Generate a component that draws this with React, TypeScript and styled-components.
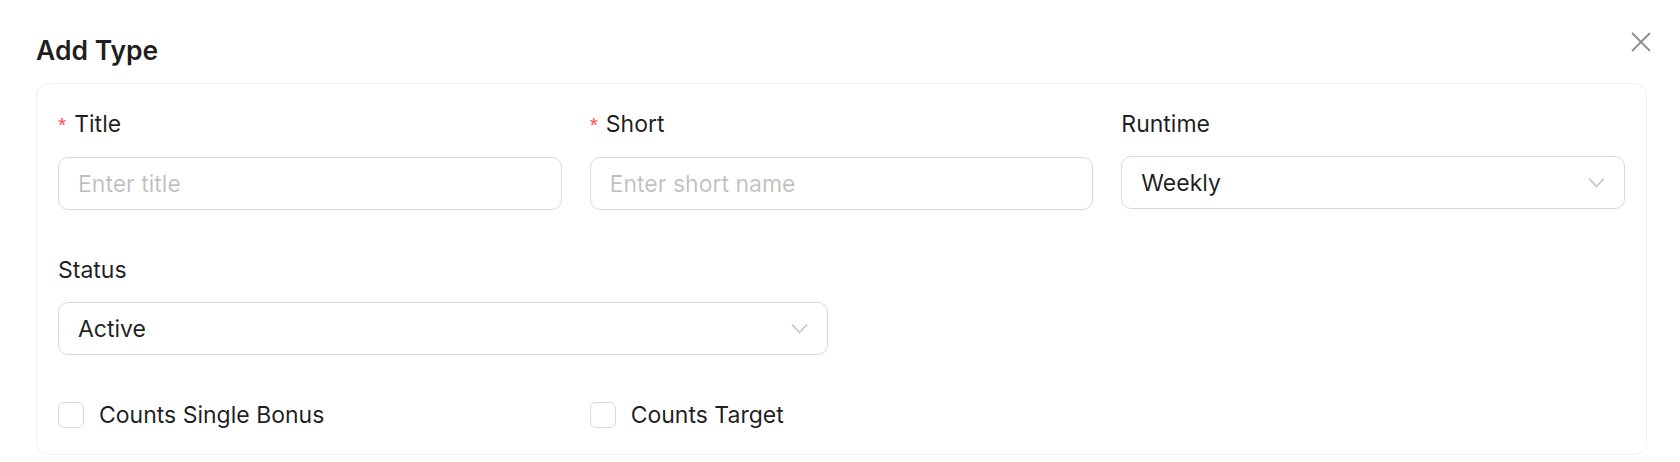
import React from "react";
import styled, { createGlobalStyle } from "styled-components";

const GlobalStyle = createGlobalStyle`
  html, body { margin: 0; padding: 0; background: #ffffff; }
  body {
    font-family: Inter, "Noto Sans", "Liberation Sans", sans-serif;
    color: rgba(0, 0, 0, 0.88);
    -webkit-font-smoothing: antialiased;
  }
  *, *::before, *::after { box-sizing: border-box; }
`;

const Modal = styled.div`
  position: relative;
  padding: 32px 33px 8px 36px;
`;

const Title = styled.h2`
  margin: 0 0 15px;
  font-size: 26.5px;
  line-height: 36px;
  font-weight: 600;
  color: rgba(0, 0, 0, 0.88);
`;

const CloseButton = styled.button`
  position: absolute;
  top: 32px;
  right: 29px;
  width: 20px;
  height: 20px;
  padding: 0;
  border: 0;
  background: none;
  color: rgba(0, 0, 0, 0.45);
  display: flex;
  cursor: pointer;
`;

const Card = styled.div`
  border: 1px solid #f0f0f0;
  border-radius: 13px;
  padding: 24px 21px 23px;
`;

const Row = styled.div<{ $cols: number; $gapAfter: number }>`
  display: grid;
  grid-template-columns: repeat(${(p) => p.$cols}, minmax(0, 1fr));
  column-gap: 28px;
  margin-bottom: ${(p) => p.$gapAfter}px;
`;

const Field = styled.div`
  display: flex;
  flex-direction: column;
  gap: 16px;
`;

const Label = styled.label`
  display: flex;
  align-items: baseline;
  font-size: 23px;
  line-height: 32px;
  color: rgba(0, 0, 0, 0.88);
`;

const Required = styled.span`
  color: #ff4d4f;
  font-family: "Liberation Sans", sans-serif;
  font-size: 21px;
  margin-right: 8px;
`;

const TextInput = styled.input`
  width: 100%;
  height: 53px;
  border: 1px solid #d9d9d9;
  border-radius: 10px;
  padding: 0 19px;
  font-family: inherit;
  font-size: 23px;
  color: rgba(0, 0, 0, 0.88);
  background: #ffffff;
  outline: none;
  &::placeholder {
    color: rgba(0, 0, 0, 0.25);
  }
`;

const Select = styled.div`
  width: 100%;
  height: 53px;
  border: 1px solid #d9d9d9;
  border-radius: 10px;
  padding: 0 19px;
  display: flex;
  align-items: center;
  justify-content: space-between;
  font-size: 23px;
  color: rgba(0, 0, 0, 0.88);
  background: #ffffff;
`;

const Chevron = styled.svg`
  width: 17px;
  height: 11px;
  flex: none;
`;

const CheckItem = styled.label`
  display: flex;
  align-items: center;
  gap: 15px;
  font-size: 23px;
  line-height: 32px;
  color: rgba(0, 0, 0, 0.88);
`;

const CheckBox = styled.span`
  width: 26px;
  height: 26px;
  border: 1px solid #d9d9d9;
  border-radius: 6px;
  background: #ffffff;
  flex: none;
`;

const ChevronDown = () => (
  <Chevron viewBox="0 0 17 11">
    <polyline points="1,1.5 8.5,9.5 16,1.5" fill="none" stroke="#bfbfbf" strokeWidth="1.4" />
  </Chevron>
);

export default function App() {
  return (
    <>
      <GlobalStyle />
      <Modal>
        <Title>Add Type</Title>
        <CloseButton aria-label="Close">
          <svg width="20" height="20" viewBox="0 0 20 20">
            <path d="M1 1 L19 19 M19 1 L1 19" stroke="currentColor" strokeWidth="1.8" fill="none" />
          </svg>
        </CloseButton>
        <Card>
          <Row $cols={3} $gapAfter={44}>
            <Field>
              <Label>
                <Required>*</Required>Title
              </Label>
              <TextInput placeholder="Enter title" />
            </Field>
            <Field>
              <Label>
                <Required>*</Required>Short
              </Label>
              <TextInput placeholder="Enter short name" />
            </Field>
            <Field>
              <Label>Runtime</Label>
              <Select>
                <span>Weekly</span>
                <ChevronDown />
              </Select>
            </Field>
          </Row>
          <Row $cols={2} $gapAfter={44}>
            <Field>
              <Label>Status</Label>
              <Select>
                <span>Active</span>
                <ChevronDown />
              </Select>
            </Field>
          </Row>
          <Row $cols={3} $gapAfter={0}>
            <CheckItem>
              <CheckBox />
              Counts Single Bonus
            </CheckItem>
            <CheckItem>
              <CheckBox />
              Counts Target
            </CheckItem>
          </Row>
        </Card>
      </Modal>
    </>
  );
}
